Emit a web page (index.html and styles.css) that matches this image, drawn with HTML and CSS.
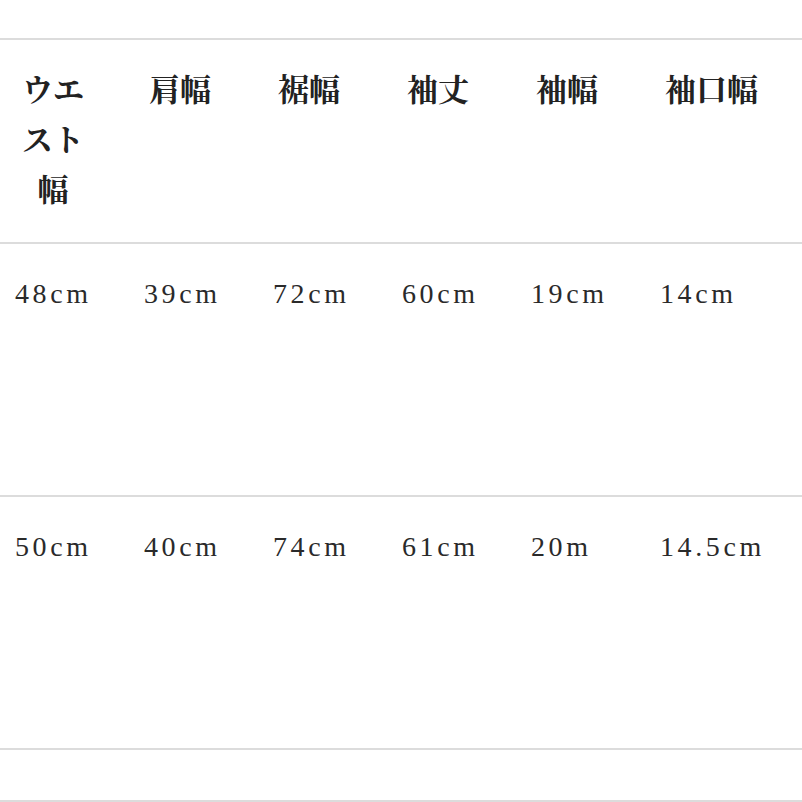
FILE: index.html
```html
<!DOCTYPE html>
<html lang="ja">
<head>
<meta charset="utf-8">
<link rel="stylesheet" href="styles.css">
</head>
<body>
<div class="table">
  <div class="row head">
    <div class="cell"><span class="narrow">ウエスト幅</span></div>
    <div class="cell">肩幅</div>
    <div class="cell">裾幅</div>
    <div class="cell">袖丈</div>
    <div class="cell">袖幅</div>
    <div class="cell">袖口幅</div>
  </div>
  <div class="row data">
    <div class="cell">48cm</div>
    <div class="cell">39cm</div>
    <div class="cell">72cm</div>
    <div class="cell">60cm</div>
    <div class="cell">19cm</div>
    <div class="cell">14cm</div>
  </div>
  <div class="row data">
    <div class="cell">50cm</div>
    <div class="cell">40cm</div>
    <div class="cell">74cm</div>
    <div class="cell">61cm</div>
    <div class="cell">20m</div>
    <div class="cell">14.5cm</div>
  </div>
  <div class="row empty"></div>
</div>
</body>
</html>
```

FILE: styles.css
```css
html, body {
  margin: 0;
  padding: 0;
  background: #ffffff;
}

.table {
  margin-top: 38px;
  width: 802px;
  border-bottom: 2px solid #dcdcdc;
}

.row {
  display: grid;
  grid-template-columns: repeat(6, 129px);
  padding-left: 15px;
  border-top: 2px solid #dcdcdc;
  box-sizing: border-box;
}

.head {
  height: 204px;
  padding-top: 23px;
  font-family: "Noto Serif CJK JP", "Noto Sans CJK JP", serif;
  font-weight: 700;
  font-size: 31px;
  line-height: 50px;
  color: #222222;
}

.head .cell {
  padding-left: 5px;
  white-space: nowrap;
}

.head .narrow {
  display: block;
  width: 62px;
  margin-left: 2px;
  white-space: normal;
  text-align: center;
}

.data {
  height: 253px;
  padding-top: 34px;
  font-family: "Liberation Serif", "Times New Roman", serif;
  font-size: 28px;
  line-height: 32px;
  letter-spacing: 3.6px;
  color: #2a2a2a;
}

.empty {
  height: 52px;
}
```
